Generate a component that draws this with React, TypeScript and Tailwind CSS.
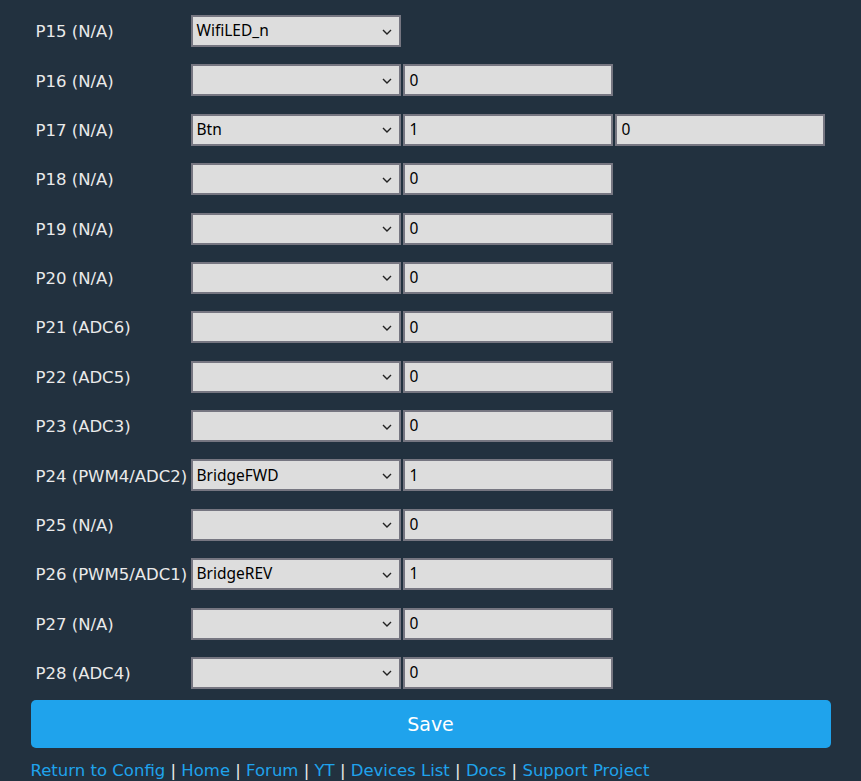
import React from 'react';

type PinRow = {
  pin: string;
  role: string;
  ch1?: string;
  ch2?: string;
};

const pins: PinRow[] = [
  { pin: 'P15 (N/A)', role: 'WifiLED_n' },
  { pin: 'P16 (N/A)', role: '', ch1: '0' },
  { pin: 'P17 (N/A)', role: 'Btn', ch1: '1', ch2: '0' },
  { pin: 'P18 (N/A)', role: '', ch1: '0' },
  { pin: 'P19 (N/A)', role: '', ch1: '0' },
  { pin: 'P20 (N/A)', role: '', ch1: '0' },
  { pin: 'P21 (ADC6)', role: '', ch1: '0' },
  { pin: 'P22 (ADC5)', role: '', ch1: '0' },
  { pin: 'P23 (ADC3)', role: '', ch1: '0' },
  { pin: 'P24 (PWM4/ADC2)', role: 'BridgeFWD', ch1: '1' },
  { pin: 'P25 (N/A)', role: '', ch1: '0' },
  { pin: 'P26 (PWM5/ADC1)', role: 'BridgeREV', ch1: '1' },
  { pin: 'P27 (N/A)', role: '', ch1: '0' },
  { pin: 'P28 (ADC4)', role: '', ch1: '0' },
];

const links = ['Return to Config', 'Home', 'Forum', 'YT', 'Devices List', 'Docs', 'Support Project'];

const field =
  'h-[32px] w-[210px] border-2 border-[#767681] bg-[#dddddd] text-[#000] text-[15.5px] leading-none';

function RoleSelect({ value }: { value: string }) {
  return (
    <div className={`${field} flex items-center justify-between pl-[4px] pr-[7px] font-['Noto_Sans',sans-serif]`}>
      <span>{value}</span>
      <svg width="10" height="6" viewBox="0 0 10 6" fill="none" className="mt-[1px]">
        <path d="M1 1l4 4 4-4" stroke="#222" strokeWidth="1.4" />
      </svg>
    </div>
  );
}

function ChannelInput({ value }: { value: string }) {
  return (
    <div className={`${field} flex items-center pl-[5px] font-['Noto_Sans',sans-serif]`}>
      {value}
    </div>
  );
}

export default function App() {
  return (
    <div className="min-h-[781px] bg-[#22313f] font-['DejaVu_Sans',sans-serif]">
      <div className="mx-auto w-[800px] pt-[15px]">
        <div className="flex flex-col">
          {pins.map((p) => (
            <div key={p.pin} className="flex h-[49.38px] items-start">
              <div className="flex h-[32px] w-[160px] items-center pl-[5px] pt-[3px] text-[16.5px] text-[#eaeaea]">
                {p.pin}
              </div>
              <div className="flex gap-[2px]">
                <RoleSelect value={p.role} />
                {p.ch1 !== undefined && <ChannelInput value={p.ch1} />}
                {p.ch2 !== undefined && <ChannelInput value={p.ch2} />}
              </div>
            </div>
          ))}
        </div>
        <button className="mt-[-6px] flex h-[48px] w-full items-center justify-center rounded-[5px] bg-[#1fa3ec] text-[19px] text-white">
          Save
        </button>
        <div className="mt-[15px] text-[16.5px] leading-none text-[#1fa3ec]">
          {links.map((l, i) => (
            <React.Fragment key={l}>
              {i > 0 && <span className="text-[#eaeaea]"> | </span>}
              <span>{l}</span>
            </React.Fragment>
          ))}
        </div>
      </div>
    </div>
  );
}
